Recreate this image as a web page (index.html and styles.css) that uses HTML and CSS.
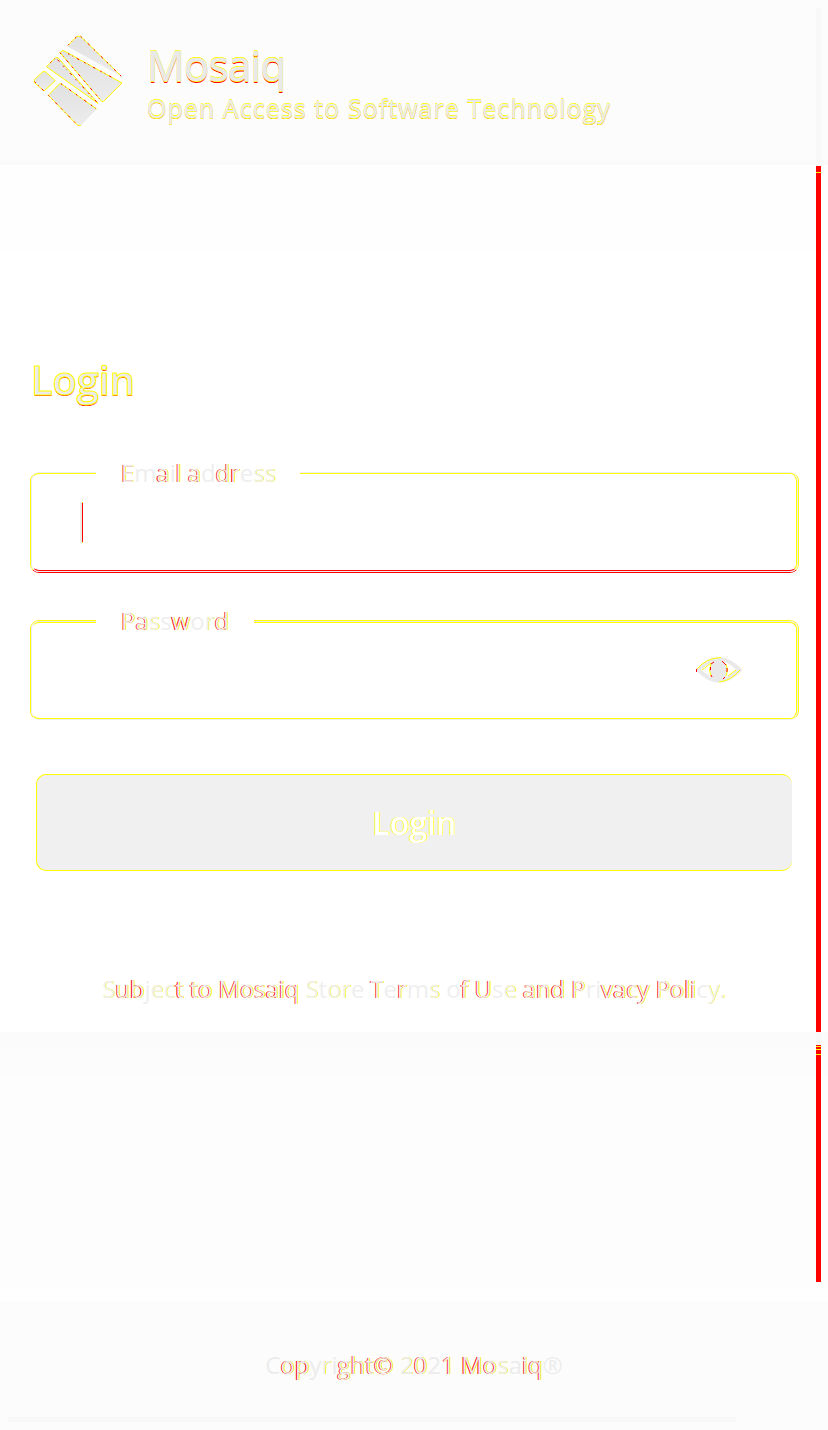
FILE: index.html
```
<!DOCTYPE html>
<html lang="en">
<head><meta charset="utf-8"><title>Mosaiq Login</title><link rel="stylesheet" href="styles.css"></head>
<body>
<div class="page">
<header class="header">
<svg class="logo" viewBox="40 45 270 276" aria-hidden="true"><defs><linearGradient id="g" x2="0" y2="1"><stop stop-color="#e1e1e1"/><stop offset="1" stop-color="#ececec"/></linearGradient></defs>
<g class="tiles"><path class="bare" d="M145 80L172 49H183L305 169Z"/><path d="M121 98L130 91L307 189L252 244H246Z"/><path d="M80 140L108 113H115L235 250Z"/><path d="M44 179L70 155H77L107 182L73 213L44 188Z"/><path class="bare" d="M231 267L124 191H120L86 226L174 316H184Z"/></g>
<path class="edges" d="M145 76L172 49H183L305 169M231 267L124 191H120L86 226L174 316H184"/>
<path class="marks" d="M145 76L170 51M183 49L305 169M121 98L245 243M145 101L286 177M92 128L108 113L235 250M45 185L73 213M86 226L174 316M124 191L231 267"/></svg>
<div class="brand"><h1>Mosaiq</h1><p class="tagline">Open Access to Software Technology</p></div>
</header>
<main class="main">
<h2>Login</h2>
<div class="field email"><label class="email-label"><span class="rim">E</span>m<span class="rim">a</span>i<span class="rim">l</span> <span class="rim">a</span>d<span class="rim">dr</span>e<span class="faint-rim">ss</span></label><i class="caret"></i></div>
<div class="field password"><label class="password-label"><span class="rim">P</span><span class="rim">a</span><span class="faint-rim">s</span>s<span class="rim">w</span>o<span class="faint-rim">r</span><span class="rim">d</span></label>
<svg class="eye" viewBox="0 0 46 26"><path d="M2.5 13Q22-9 43.5 13Q23 34 2.5 13Z" fill="#fff" stroke="#e9e9e9" stroke-width="4"/><path d="M1 12Q10 1 25 .5M44 13Q35 24 23 25M6 13L15 6M40 13L32 19" fill="none" stroke="#ff0"/><ellipse cx="22.5" cy="13" rx="8.5" ry="10.5" fill="#e9e9e9"/><path d="M15 19Q12 13 15 7M30 19Q33 13 30 7" fill="none" stroke="#ff0"/><path d="M15 7L18 5M26 4L30 8M31 11V15M29 20L27 22M14.500 10V13M.5 12V15M15 18L16 20" stroke="red"/></svg></div>
<button>Login</button>
<p class="terms"><span class="faint-rim">S</span><span class="rim">ub</span>j<span class="faint-rim">ec</span><span class="rim">t to Mosaiq</span> <span class="faint-rim">S</span>t<span class="faint-rim">or</span>e <span class="rim">T</span>e<span class="rim">r</span>m<span class="faint-rim">s</span> o<span class="rim">f U</span>s<span class="faint-rim">e</span> <span class="rim">and P</span>ri<span class="rim">vacy Poli</span>c<span class="faint-rim">y.</span></p>
</main>
<section class="space"></section>
<footer><p>C<span class="rim">op</span>y<span class="faint-rim">r</span>i<span class="rim">ght©</span> <span class="faint-rim">2</span><span class="rim">0</span>2<span class="rim">1</span> <span class="rim">Mo</span><span class="faint-rim">s</span>a<span class="rim">iq</span>®</p></footer>
<div class="scroll-x"></div>
<div class="scroll-y"><i class="track"></i><i class="red first"></i><i class="gap"></i><i class="red second"></i></div>
</div>
</body></html>
```
FILE: styles.css
```
*{box-sizing:border-box}
body,h1,h2,p{margin:0}
body{font-family:"Open Sans",sans-serif;background:#fff}
.page{position:relative;width:828px;height:1430px;overflow:hidden}
.header{height:165px;padding:35px 33px;display:flex;background:linear-gradient(#fcfcfc 162px,#fafafa 162px)}
.logo{width:90px;height:92px;flex:none}
.tiles path{fill:url(#g);stroke:#ff0;stroke-width:3}
.tiles .bare{stroke:none}
.edges{fill:none;stroke:#ff0;stroke-width:3}
.marks{fill:none;stroke:red;stroke-width:3;stroke-dasharray:5 10 2 13 8 17}
.brand{padding-left:24px;white-space:nowrap}
h1{font-size:42px;line-height:60px;height:59px;font-weight:400;letter-spacing:-.7px;color:#e9e9e9;-webkit-text-stroke:.7px #e9e9e9;text-shadow:0 -1px #ff0,0 1px #ff0,0 -1.4px #ff0,0 1.5px #f00}
.tagline{font-size:25px;line-height:28px;font-weight:400;color:#ebebeb;letter-spacing:1.05px;-webkit-text-stroke:.3px #ebebeb;text-shadow:0 -1px #ff0,0 1px #ff0,0 1.2px #f00}
.main{height:867px;padding:188px 30px 0;display:flex;flex-direction:column;background:linear-gradient(#fefefe 87px,#fff 87px)}
h2{font-size:40px;line-height:54px;height:54px;padding-left:1px;font-weight:600;letter-spacing:-.2px;color:#ebebeb;-webkit-text-stroke:1px #ff0;text-shadow:0 .5px #f00}
.field{width:769px;position:relative;border:1px solid #ff0;border-radius:9px;flex:none}
.field::before,.field::after{content:"";position:absolute;border:1px solid #ececec;border-radius:8px;inset:0;pointer-events:none}
.field::after{inset:1px;border-color:transparent #ff0 transparent transparent;border-radius:7px}
.email{margin-top:65px;height:101px;border-color:#eee #ff0 red #ff0;padding:29px 49px}
.email::before{border-top-color:#ff0}
.email::after{border-bottom-color:red}
.password{margin-top:47px;height:100px;border-bottom-color:#eee;padding:36px 56px;display:flex;justify-content:flex-end}
.password::before{border-bottom-color:#ff0}
.password::after{border-top-color:#ff0}
label{position:absolute;z-index:1;left:65px;top:-16px;padding-left:25px;height:32px;line-height:32px;background:#fff;font-size:24px;color:#eee;white-space:nowrap}
.email-label{width:204px;letter-spacing:-.1px}
.password-label{width:158px}
.caret{display:block;width:3px;height:41px;border:solid #e9eee9;border-width:0 0 0 2px;background:linear-gradient(#ff0 1px,red 1px 40px,#ff0 40px)}
.eye{width:46px;height:26px}
.rim{text-shadow:-.8px 0 #f00,.8px 0 #ff0}
.faint-rim{text-shadow:.6px 0 #ff0}
button{width:756px;height:97px;margin:54px 6px 0;border:solid #ff0;border-width:1px 0 1px 1px;border-radius:10px;background:#f0f0f0;color:#fff;font:600 32px/44px "Open Sans",sans-serif;text-shadow:-.7px 0 #ff0,.7px 0 #ff0}
.terms{margin-top:101px;text-align:center;font-size:24px;line-height:34px;letter-spacing:-.12px;color:#efefef;white-space:nowrap}
.space{height:270px;background:linear-gradient(#fbfbfb 16px,#fcfcfc 16px 45px,#fdfdfd 45px 240px,#fefefe)}
footer{height:128px;background:#fcfcfc;text-align:center;padding-top:46px;font-size:24px;line-height:34px;color:#ececec}
.scroll-x{position:absolute;left:8px;width:728px;top:1417px;height:5px;background:#f8f8f8}
.scroll-y{position:absolute;left:816px;top:8px;width:5px;display:flex;flex-direction:column}
.track{height:158px;background:#f8f8f8}
.red{background:red}
.first{height:866px;background:linear-gradient(red 6px,#ff0 6px 7px,red 7px)}
.gap{height:13px;background:#f8f8f8}
.second{height:237px;background:linear-gradient(red 1px,#ff0 1px 2px,red 2px 4px,#ff0 4px 5px,red 5px 9px,#ff0 9px 10px,red 10px)}
```
